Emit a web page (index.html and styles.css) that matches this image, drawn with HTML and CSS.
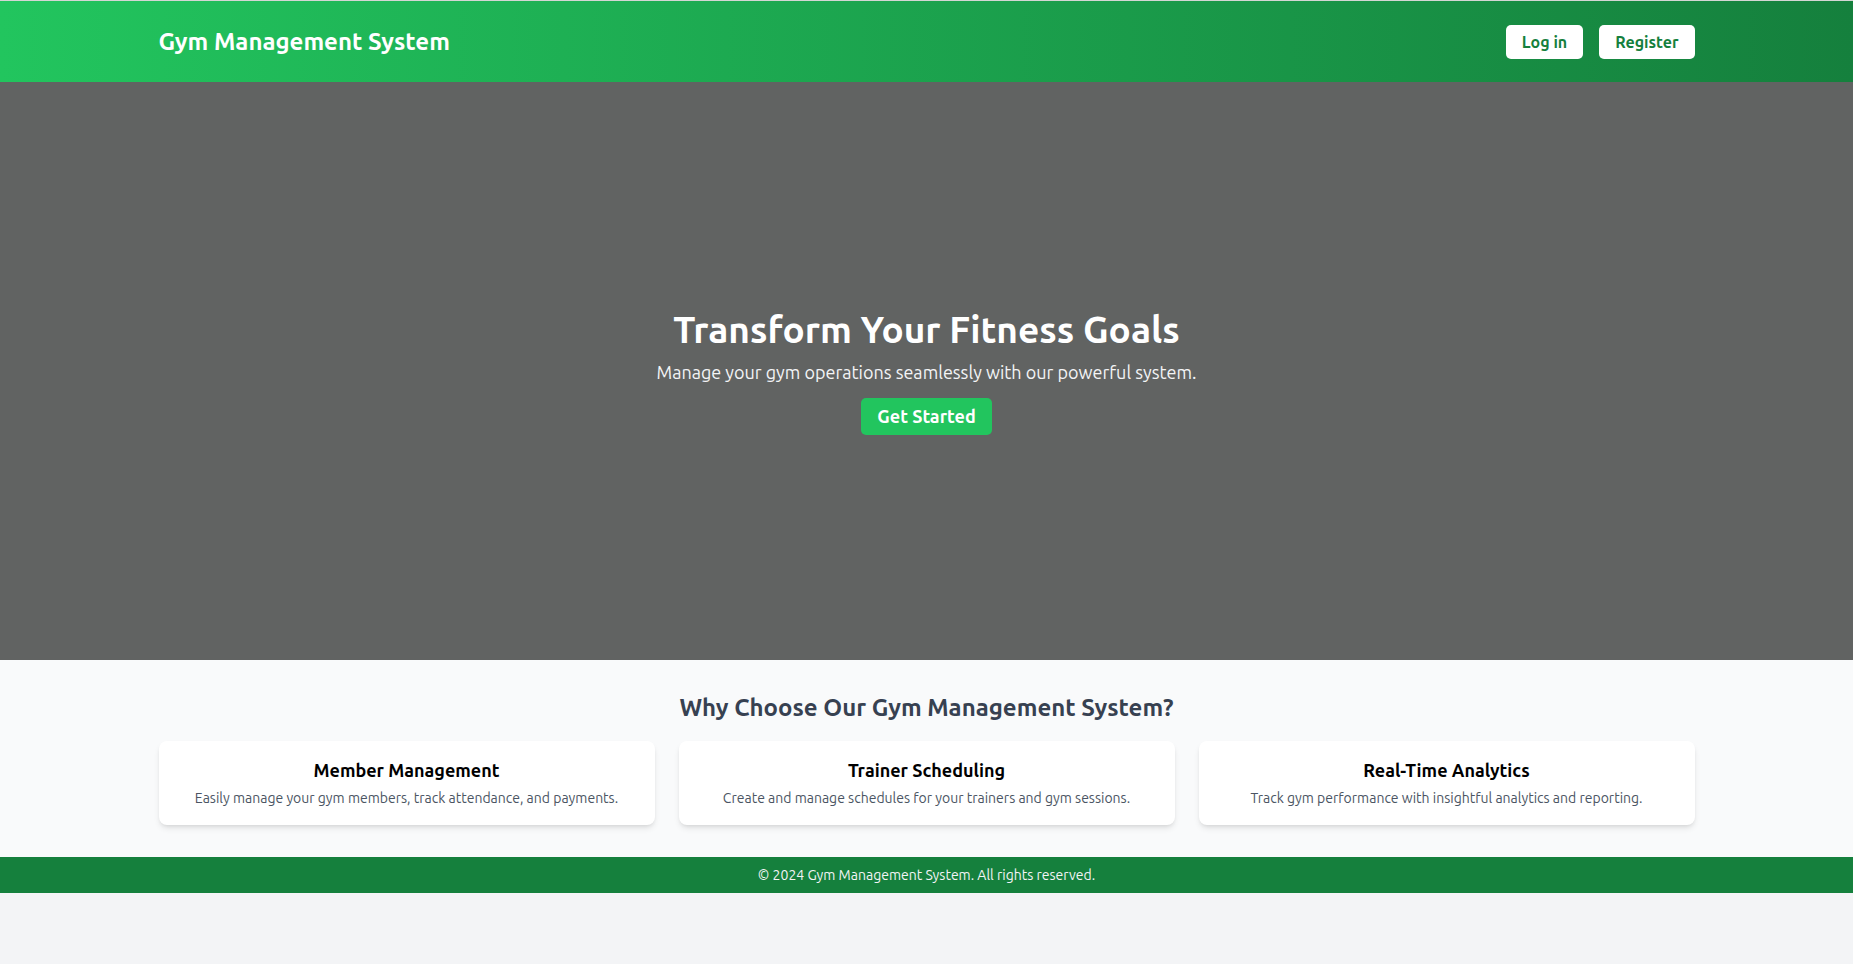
FILE: index.html
```html
<!DOCTYPE html>
<html lang="en">
<head>
<meta charset="utf-8">
<title>Gym Management System</title>
<link rel="stylesheet" href="styles.css">
</head>
<body>
<header class="site-header">
  <div class="container header-inner">
    <h1 class="brand">Gym Management System</h1>
    <nav class="nav">
      <a class="nav-btn" href="#">Log in</a>
      <a class="nav-btn" href="#">Register</a>
    </nav>
  </div>
</header>
<section class="hero">
  <h2 class="hero-title">Transform Your Fitness Goals</h2>
  <p class="hero-sub">Manage your gym operations seamlessly with our powerful system.</p>
  <a class="hero-btn" href="#">Get Started</a>
</section>
<section class="features">
  <div class="container">
    <h2 class="features-title">Why Choose Our Gym Management System?</h2>
    <div class="cards">
      <div class="card">
        <h3 class="card-title">Member Management</h3>
        <p class="card-text">Easily manage your gym members, track attendance, and payments.</p>
      </div>
      <div class="card">
        <h3 class="card-title">Trainer Scheduling</h3>
        <p class="card-text">Create and manage schedules for your trainers and gym sessions.</p>
      </div>
      <div class="card">
        <h3 class="card-title">Real-Time Analytics</h3>
        <p class="card-text">Track gym performance with insightful analytics and reporting.</p>
      </div>
    </div>
  </div>
</section>
<footer class="site-footer">
  <p class="footer-text">© 2024 Gym Management System. All rights reserved.</p>
</footer>
</body>
</html>
```
FILE: styles.css
```css
* { box-sizing: border-box; }
html, body { margin: 0; padding: 0; }
body {
  background: #f3f4f6;
  font-family: "Ubuntu", "Lato", "Noto Sans", sans-serif;
  color: #111827;
}
.container {
  width: 1536px;
  margin: 0 auto;
}
.site-header {
  border-top: 1px solid #d4d6d4;
  height: 82px;
  background: linear-gradient(to right, #22c55e, #15803d);
  display: flex;
  align-items: center;
}
.header-inner {
  display: flex;
  justify-content: space-between;
  align-items: center;
}
.brand {
  margin: 0;
  color: #fff;
  font-size: 24px;
  font-weight: 700;
  line-height: 32px;
}
.nav {
  display: flex;
  gap: 16px;
}
.nav-btn {
  display: inline-block;
  background: #fff;
  color: #15803d;
  text-decoration: none;
  font-size: 16px;
  font-weight: 700;
  line-height: 24px;
  padding: 5px 16px;
  border-radius: 5px;
}
.hero {
  height: 578px;
  padding-top: 2px;
  background: #616362;
  display: flex;
  flex-direction: column;
  align-items: center;
  justify-content: center;
  color: #fff;
  text-align: center;
}
.hero-title {
  margin: 0 0 8px;
  font-size: 37px;
  font-weight: 700;
  line-height: 40px;
}
.hero-sub {
  margin: 0 0 12px;
  font-size: 18px;
  font-weight: 400;
  line-height: 28px;
  color: #f3f4f6;
}
.hero-btn {
  display: inline-block;
  background: #22c55e;
  color: #fff;
  text-decoration: none;
  font-size: 18px;
  font-weight: 700;
  line-height: 29px;
  padding: 4px 16px;
  border-radius: 5px;
}
.features {
  background: #f9fafb;
  padding: 32px 0;
}
.features-title {
  margin: 0 0 17px;
  text-align: center;
  color: #374151;
  font-size: 24px;
  font-weight: 700;
  line-height: 32px;
}
.cards {
  display: grid;
  grid-template-columns: repeat(3, 1fr);
  gap: 24px;
}
.card {
  background: #fff;
  border-radius: 8px;
  padding: 15px 16px 17px;
  text-align: center;
  box-shadow: 0 4px 6px -1px rgba(0,0,0,0.1), 0 2px 4px -2px rgba(0,0,0,0.1);
}
.card-title {
  margin: 0;
  font-size: 18px;
  font-weight: 700;
  line-height: 28px;
  color: #000;
}
.card-text {
  margin: 4px 0 0;
  font-size: 14px;
  line-height: 20px;
  color: #4b5563;
}
.site-footer {
  background: #15803d;
  padding: 8px 0;
  text-align: center;
}
.footer-text {
  margin: 0;
  color: #f3f4f6;
  font-size: 14px;
  line-height: 20px;
}
```
